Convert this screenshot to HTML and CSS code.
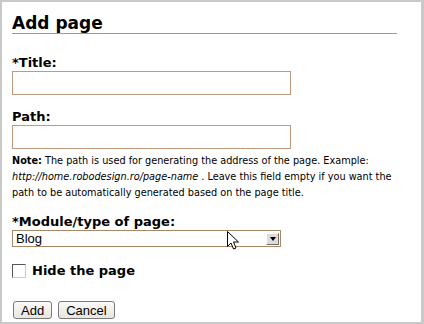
FILE: index.html
```html
<!DOCTYPE html>
<html lang="en">
<head>
    <meta charset="UTF-8">
    <title>Add page</title>
    <link rel="stylesheet" href="styles.css">
</head>
<body>
    <div class="panel">
        <h1 class="panel-title">Add page</h1>
        <form class="page-form">
            <label class="field-label" for="title">*Title:</label>
            <input class="text-field" type="text" id="title">

            <label class="field-label path-label" for="path">Path:</label>
            <input class="text-field" type="text" id="path">
            <p class="note"><b>Note:</b> The path is used for generating the address of the page. Example: <i class="example-url">http://home.robodesign.ro/page-name</i>. Leave this field empty if you want the path to be automatically generated based on the page title.</p>

            <label class="field-label module-label" for="module">*Module/type of page:</label>
            <div class="select-box">
                <select id="module" class="select-field">
                    <option>Blog</option>
                </select>
                <span class="select-arrow"></span>
                <!-- mouse pointer from the screenshot -->
                <svg class="pointer" width="12" height="19" viewBox="0 0 12 19">
                    <path d="M0.5 0.5 L0.5 15.5 L4 12 L6.5 18 L9 17 L6.5 11 L11.5 11 Z" fill="#fff" stroke="#000" stroke-width="1"/>
                </svg>
            </div>

            <label class="check-row">
                <input type="checkbox" class="check-box">
                <span>Hide the page</span>
            </label>

            <div class="buttons">
                <button type="button" class="btn">Add</button>
                <button type="button" class="btn">Cancel</button>
            </div>
        </form>
    </div>
</body>
</html>
```

FILE: styles.css
```css
/* Page frame */
body {
    margin: 0;
    padding: 2px;
    background-color: #c9c9c9;
    font-family: 'DejaVu Sans', sans-serif;
    color: #000;
}

.panel {
    width: 385px;
    height: 309px;
    background-color: #fff;
    padding: 11px 24px 0 10px;
    margin-right: 3px;
}

/* Heading with grey rule */
.panel-title {
    margin: 0;
    font-size: 17px;
    line-height: 20px;
    font-weight: bold;
    border-bottom: 1px solid #9a9a9a;
}

.page-form {
    display: flex;
    flex-direction: column;
    align-items: flex-start;
}

.field-label {
    display: block;
    margin-top: 21px;
    font-size: 13px;
    line-height: 16px;
    font-weight: bold;
}

.path-label {
    margin-top: 14px;
}

.module-label {
    margin-top: 13px;
}

.text-field {
    box-sizing: border-box;
    width: 279px;
    height: 24px;
    margin: 0;
    border: 1px solid #c09a7a;
    background: #fff;
}

/* Help text below the path field */
.note {
    margin: 4px 0 0;
    font-family: 'DejaVu Sans Condensed', 'DejaVu Sans', sans-serif;
    font-stretch: condensed;
    font-size: 10.8px;
    line-height: 16px;
}

.example-url {
    padding-right: 3px;
}

/* Dropdown */
.select-box {
    position: relative;
    box-sizing: border-box;
    width: 269px;
    height: 17px;
    display: flex;
    align-items: center;
    border: 1px solid #a88767;
    background: #fff;
}

.select-field {
    appearance: none;
    flex: 1;
    border: none;
    background: transparent;
    padding: 0 0 0 3px;
    margin: 0;
    font-family: 'Liberation Sans', sans-serif;
    font-size: 13px;
    outline: none;
}

.select-arrow {
    width: 13px;
    height: 12px;
    margin-right: 1px;
    box-sizing: border-box;
    border: 1px solid;
    border-color: #fff #707070 #707070 #fff;
    background: #dcdcdc;
    display: flex;
    align-items: center;
    justify-content: center;
}

.select-arrow::after {
    content: "";
    border-left: 3px solid transparent;
    border-right: 3px solid transparent;
    border-top: 4px solid #000;
}

.pointer {
    position: absolute;
    left: 214px;
    top: 0;
}

/* Checkbox row */
.check-row {
    display: flex;
    align-items: center;
    gap: 6px;
    margin-top: 16px;
    font-size: 13px;
    font-weight: bold;
    line-height: 16px;
}

.check-box {
    appearance: none;
    width: 14px;
    height: 14px;
    margin: 0;
    border: 1px solid;
    border-color: #555 #ccc #ccc #555;
    background: #fff;
}

/* Form buttons */
.buttons {
    display: flex;
    gap: 6px;
    margin-top: 22px;
    margin-left: 1px;
}

.btn {
    height: 18px;
    padding: 0 7px;
    border: 1px solid #7a7a7a;
    border-radius: 3px;
    background: linear-gradient(#fbfaf8, #e8e5de);
    font-family: 'Liberation Sans', sans-serif;
    font-size: 13px;
    color: #000;
}
```
